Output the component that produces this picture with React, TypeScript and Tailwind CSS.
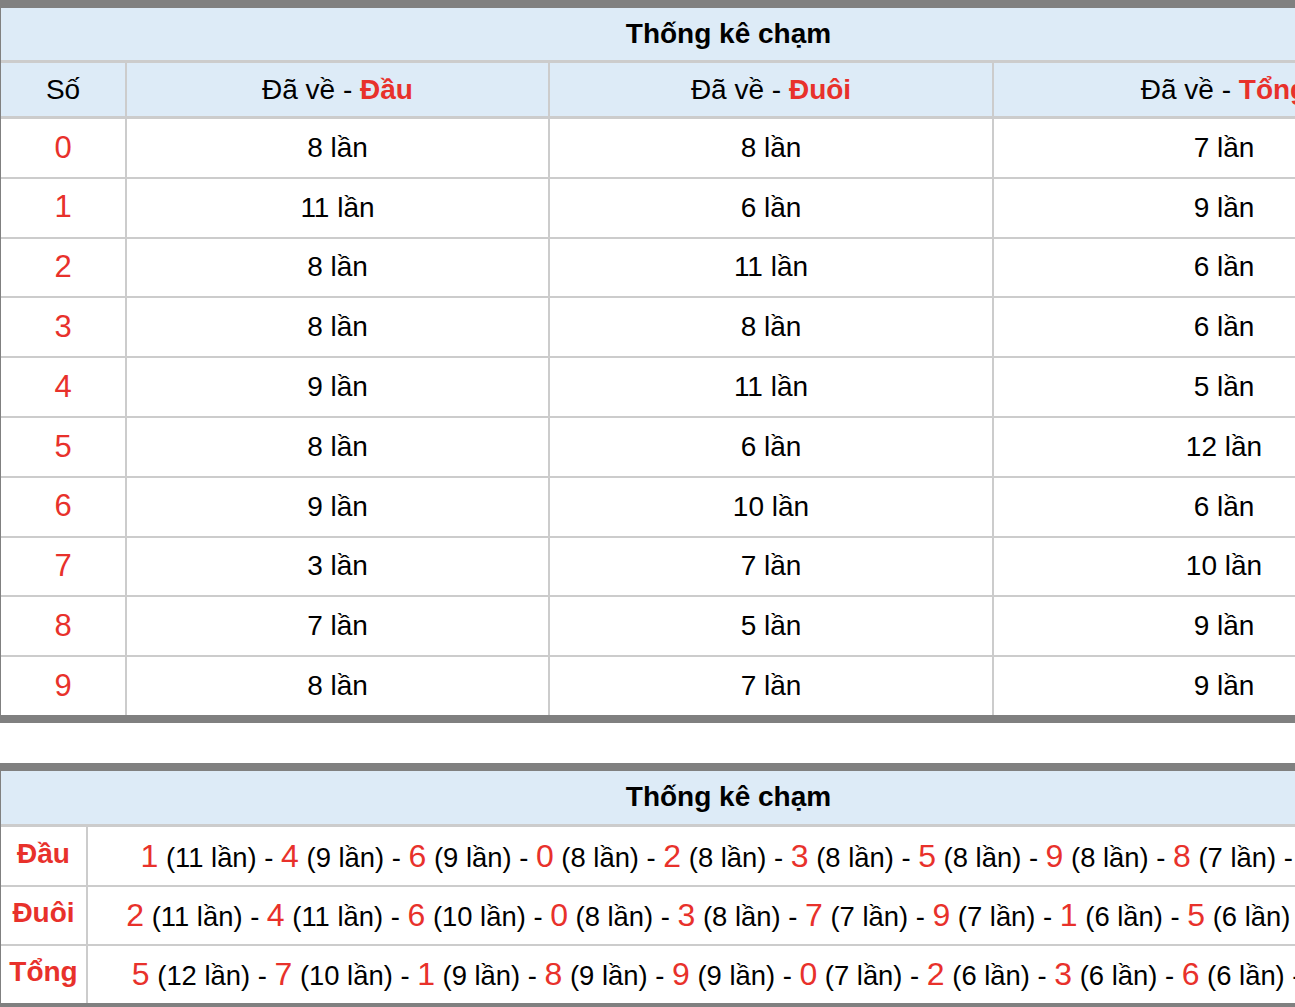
const dau = [8, 11, 8, 8, 9, 8, 9, 3, 7, 8];
const duoi = [8, 6, 11, 8, 11, 6, 10, 7, 5, 7];
const tong = [7, 9, 6, 6, 5, 12, 6, 10, 9, 9];

const sortDesc = (arr: number[]) =>
    arr
        .map((c, n) => ({ n, c }))
        .sort((a, b) => b.c - a.c || a.n - b.n);

const RankLine = ({ values }: { values: number[] }) => (
    <span className="whitespace-nowrap text-[27.4px]">
        {sortDesc(values).map((item, i) => (
            <span key={item.n}>
                {i > 0 && " - "}
                <span className="text-[32px] text-[#e8312b]">{item.n}</span>{" "}
                ({item.c} lần)
            </span>
        ))}
    </span>
);

export default function App() {
    const summary = [
        { label: "Đầu", values: dau, h: "h-[60px] border-b-2" },
        { label: "Đuôi", values: duoi, h: "h-[59px] border-b-2" },
        { label: "Tổng", values: tong, h: "h-[57px]" },
    ];

    return (
        <div className="w-[1295px] h-[1007px] overflow-hidden bg-white text-black font-['Liberation_Sans',Arial,sans-serif] text-[28px]">
            {/* bảng chạm theo số */}
            <div className="w-[1456px] border-t-8 border-b-8 border-l border-[#808080]">
                <div className="h-[55px] flex items-center justify-center bg-[#ddebf7] border-b-[3px] border-[#cccccc] font-bold">
                    Thống kê chạm
                </div>
                <div className="h-[56px] grid grid-cols-[126px_423px_444px_462px] bg-[#ddebf7] border-b-[3px] border-[#cccccc]">
                    <div className="flex items-center justify-center border-r-2 border-[#cccccc]">Số</div>
                    <div className="flex items-center justify-center border-r-2 border-[#cccccc]">
                        Đã về -&nbsp;<b className="text-[#e8312b]">Đầu</b>
                    </div>
                    <div className="flex items-center justify-center border-r-2 border-[#cccccc]">
                        Đã về -&nbsp;<b className="text-[#e8312b]">Đuôi</b>
                    </div>
                    <div className="flex items-center justify-center border-r-2 border-[#cccccc]">
                        Đã về -&nbsp;<b className="text-[#e8312b]">Tổng</b>
                    </div>
                </div>
                {dau.map((_, i) => (
                    <div
                        key={i}
                        className={
                            i < 9
                                ? "h-[59.8px] grid grid-cols-[126px_423px_444px_462px] border-b-2 border-[#cccccc]"
                                : "h-[57.8px] grid grid-cols-[126px_423px_444px_462px]"
                        }
                    >
                        <div className="flex items-center justify-center border-r-2 border-[#cccccc] text-[31px] text-[#e8312b]">
                            {i}
                        </div>
                        <div className="flex items-center justify-center border-r-2 border-[#cccccc]">{dau[i]} lần</div>
                        <div className="flex items-center justify-center border-r-2 border-[#cccccc]">{duoi[i]} lần</div>
                        <div className="flex items-center justify-center border-r-2 border-[#cccccc]">{tong[i]} lần</div>
                    </div>
                ))}
            </div>

            {/* bảng xếp hạng */}
            <div className="mt-10 w-[1456px] border-t-8 border-b-8 border-l border-[#808080]">
                <div className="h-[56px] flex items-center justify-center bg-[#ddebf7] border-b-[3px] border-[#cccccc] font-bold">
                    Thống kê chạm
                </div>
                {summary.map(row => (
                    <div key={row.label} className={`${row.h} grid grid-cols-[87px_1fr] border-[#cccccc]`}>
                        <div className="flex items-center justify-center pb-1 border-r-2 border-[#cccccc] font-bold text-[#e8312b]">
                            {row.label}
                        </div>
                        <div className="flex items-center justify-center">
                            <RankLine values={row.values} />
                        </div>
                    </div>
                ))}
            </div>
        </div>
    );
}
